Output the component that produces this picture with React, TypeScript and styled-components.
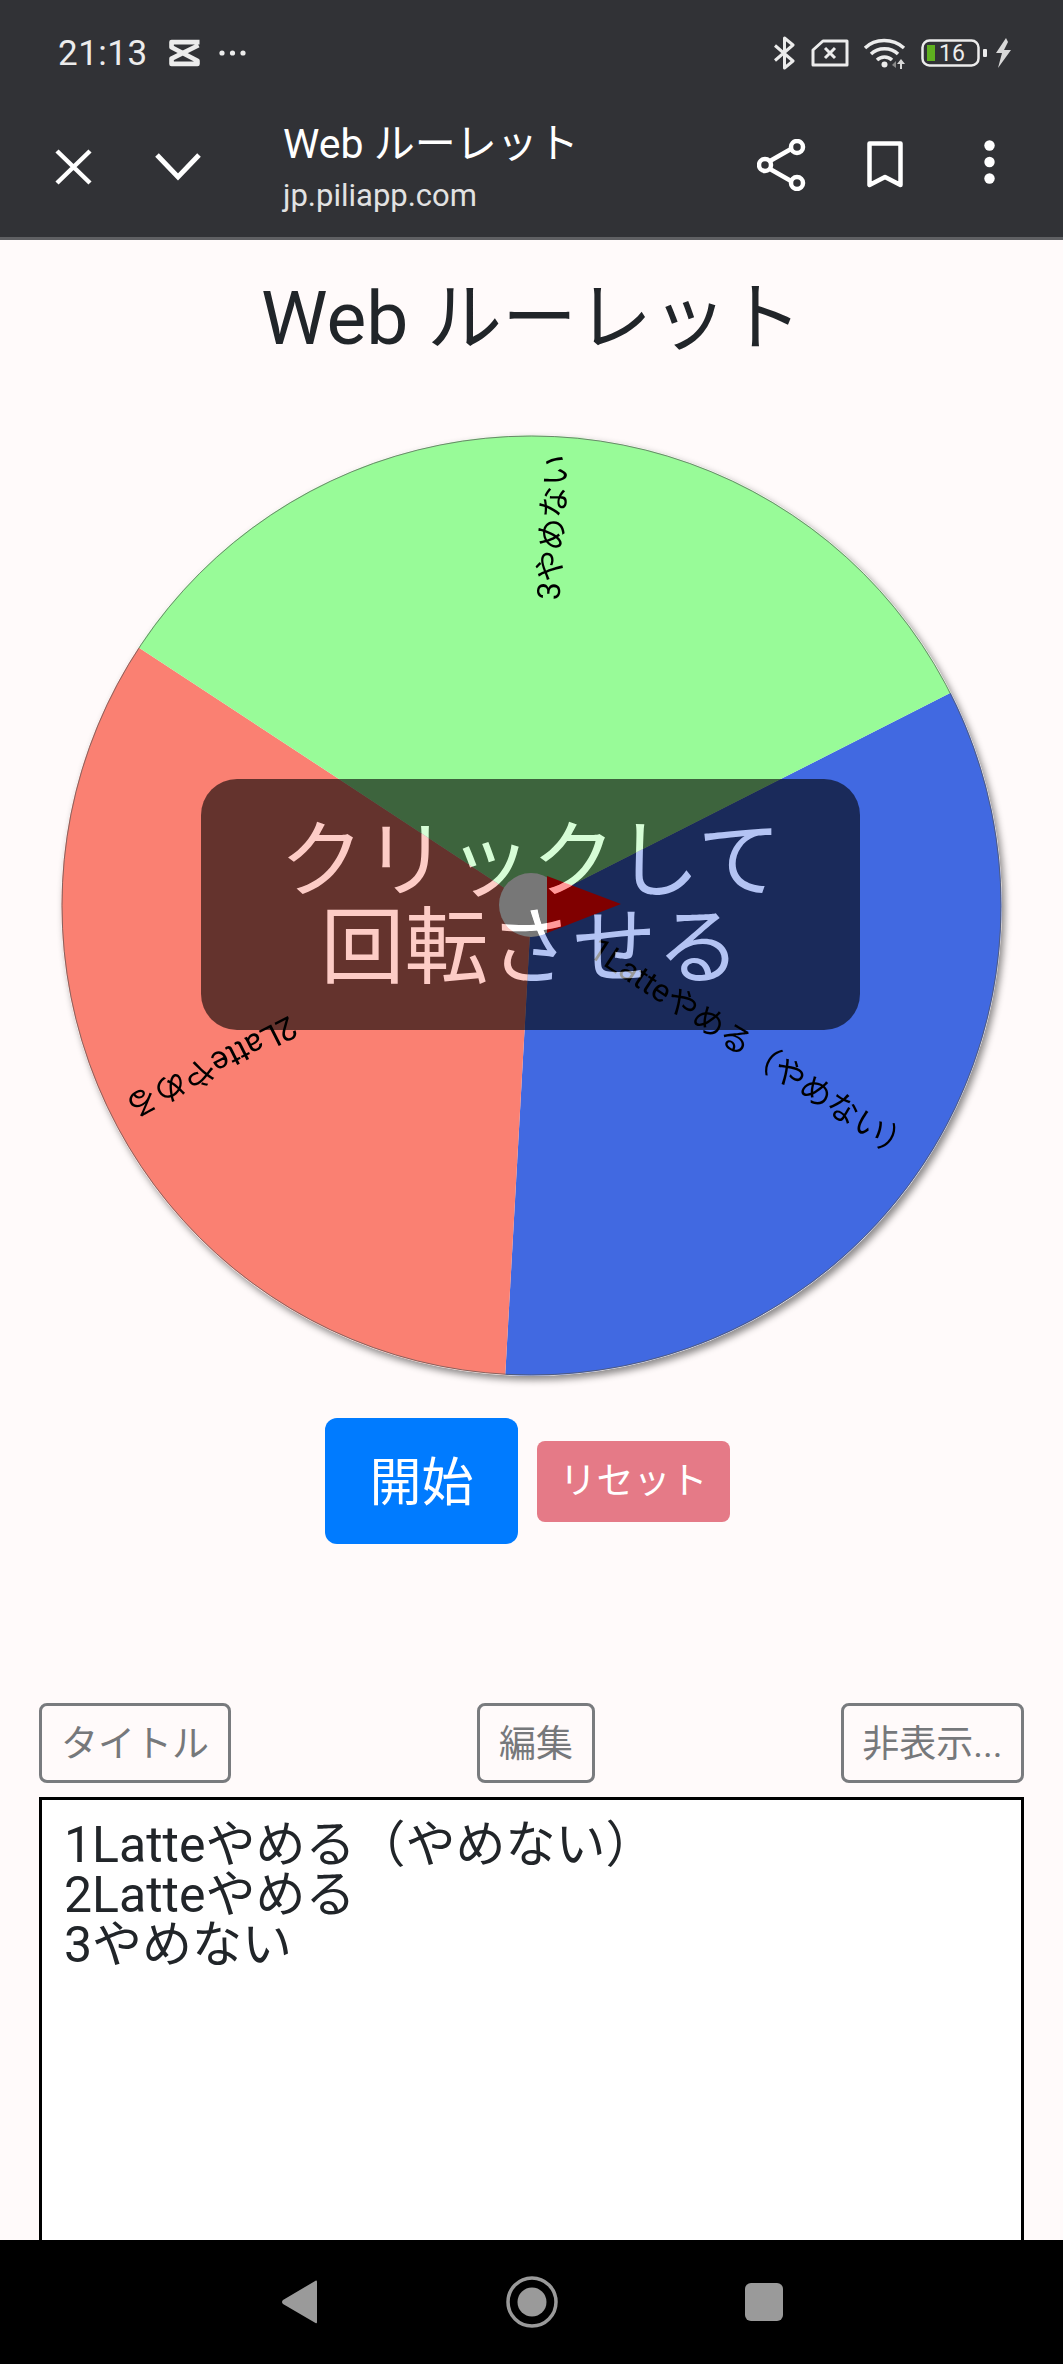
import React from 'react';
import styled, {createGlobalStyle} from 'styled-components';

const FONT = `Roboto, "Noto Sans CJK JP", sans-serif`;

const GlobalStyle = createGlobalStyle`
  html, body {
    margin: 0;
    padding: 0;
    background: #fffafa;
  }
  * {
    box-sizing: border-box;
  }
`;

const Screen = styled.div`
  display: flex;
  flex-direction: column;
  width: 1063px;
  height: 2364px;
  overflow: hidden;
  font-family: ${FONT};
  background: #fffafa;
`;

/* browser chrome */

const Header = styled.header`
  flex: none;
  height: 240px;
  background: #313236;
  border-bottom: 3px solid #5f6063;
`;

const StatusBar = styled.div`
  display: flex;
  align-items: center;
  justify-content: space-between;
  height: 106px;
  padding: 0 51px 0 58px;
  color: #ececec;
`;

const StatusGroup = styled.div`
  display: flex;
  align-items: center;
`;

const Clock = styled.span`
  font-size: 35px;
  letter-spacing: 0.5px;
  margin-right: 20px;
`;

const AppBar = styled.div`
  display: flex;
  align-items: center;
  height: 131px;
  padding: 0 68px 10px 55px;
`;

const CloseSlot = styled.div`
  display: flex;
  width: 100px;
`;

const ChevronSlot = styled.div`
  display: flex;
  width: 128px;
`;

const PageInfo = styled.div`
  flex: 1;
  display: flex;
  flex-direction: column;
  color: #fff;
`;

const PageTitle = styled.span`
  font-size: 41px;
  line-height: 50px;
`;

const PageUrl = styled.span`
  font-size: 31px;
  line-height: 38px;
  color: #e2e2e2;
  margin-top: 8px;
`;

const AppActions = styled.div`
  display: flex;
  align-items: center;
  gap: 61px;
  margin-top: -4px;
`;

/* page */

const Main = styled.main`
  flex: 1;
  min-height: 0;
  overflow: hidden;
  display: flex;
  flex-direction: column;
  padding: 0 39px;
`;

const Title = styled.h1`
  margin: 38px 0 0;
  font-size: 75px;
  line-height: 80px;
  font-weight: 400;
  text-align: center;
  color: #212529;
`;

const WheelWrap = styled.div`
  position: relative;
  isolation: isolate;
  flex: none;
  align-self: center;
  width: 941px;
  height: 941px;
  margin-top: 77px;
  border-radius: 50%;
  box-shadow: 3px 4px 7px rgba(0, 0, 0, 0.45);
`;

const WheelSvg = styled.svg`
  display: block;
  width: 941px;
  height: 941px;
`;

const WheelLabel = styled.text`
  font-family: ${FONT};
  font-size: 32px;
  fill: #000;
  dominant-baseline: central;
  text-anchor: end;
`;

const Overlay = styled.div`
  position: absolute;
  z-index: 1;
  left: 140px;
  top: 344px;
  width: 659px;
  height: 251px;
  border-radius: 36px;
  background: rgba(0, 0, 0, 0.6);
`;

const HubLayer = styled.svg`
  position: absolute;
  z-index: 2;
  left: 0;
  top: 0;
  width: 941px;
  height: 941px;
`;

const OverlayText = styled.div`
  position: absolute;
  z-index: 3;
  left: 140px;
  top: 344px;
  width: 659px;
  height: 251px;
  display: flex;
  align-items: center;
  justify-content: center;
  text-align: center;
  font-size: 84px;
  line-height: 87px;
  color: #999;
  mix-blend-mode: plus-lighter;
`;

const StartRow = styled.div`
  display: flex;
  align-items: center;
  justify-content: center;
  gap: 19px;
  margin-top: 42px;
  padding-right: 8px;
`;

const StartButton = styled.button`
  width: 193px;
  height: 126px;
  padding: 0 0 6px;
  border: 0;
  border-radius: 12px;
  background: #007bff;
  color: #fff;
  font-family: ${FONT};
  font-size: 52px;
`;

const ResetButton = styled.button`
  width: 193px;
  height: 81px;
  padding: 0 0 6px;
  border: 0;
  border-radius: 8px;
  background: #e57a87;
  color: #fff;
  font-family: ${FONT};
  font-size: 37px;
`;

const ToolRow = styled.div`
  display: flex;
  justify-content: space-between;
  margin-top: 159px;
`;

const OutlineButton = styled.button<{$width: number}>`
  width: ${p => p.$width}px;
  height: 80px;
  padding: 0 0 4px;
  border: 3px solid #797b7e;
  border-radius: 8px;
  background: transparent;
  color: #76787b;
  font-family: ${FONT};
  font-size: 37px;
`;

const Items = styled.textarea`
  flex: none;
  display: block;
  width: 100%;
  height: 600px;
  margin-top: 14px;
  padding: 20px 22px;
  border: 3px solid #000;
  border-radius: 0;
  background: #fff;
  color: #212529;
  font-family: ${FONT};
  font-size: 50px;
  line-height: 50px;
  resize: none;
  outline: none;
`;

/* android navigation */

const NavBar = styled.nav`
  flex: none;
  display: grid;
  grid-template-columns: repeat(3, 232px);
  justify-content: center;
  align-items: center;
  justify-items: center;
  height: 124px;
  background: #000;
`;

const slices = [
  {from: -26.9, to: 93.2, color: '#4169e1', label: '1Latteやめる（やめない）'},
  {from: 93.2, to: 213.3, color: '#fa8072', label: '2Latteやめる'},
  {from: 213.3, to: 333.1, color: '#98fb98', label: '3やめない'},
];

const C = 470.5;
const R = 470;

const polar = (deg: number, r: number) => {
  const a = (deg * Math.PI) / 180;
  return `${C + r * Math.cos(a)} ${C + r * Math.sin(a)}`;
};

const Wheel = () => (
  <WheelSvg viewBox="0 0 941 941">
    {slices.map(s => (
      <path
        key={s.label}
        d={`M${C} ${C} L${polar(s.from, R)} A${R} ${R} 0 0 1 ${polar(s.to, R)} Z`}
        fill={s.color}
      />
    ))}
    <circle cx={C} cy={C} r={R - 0.5} fill="none" stroke="#555" strokeOpacity="0.7" strokeWidth="1"/>
    {slices.map(s => (
      <WheelLabel
        key={s.label}
        x={C + 452}
        y={C}
        transform={`rotate(${(s.from + s.to) / 2} ${C} ${C})`}
      >
        {s.label}
      </WheelLabel>
    ))}
  </WheelSvg>
);

const Hub = () => (
  <HubLayer viewBox="0 0 941 941">
    <circle cx="470" cy="470" r="32" fill="#777"/>
    <polygon points="486,441 560,469 486,498" fill="#800000"/>
  </HubLayer>
);

const CapIcon = () => (
  <svg width="33" height="28" viewBox="0 0 31 27" fill="none" stroke="#ececec" strokeWidth="4.5">
    <path d="M30 3 H3 V8 L28 21 V24 H3 V19 L29 6" strokeLinejoin="round"/>
  </svg>
);

const MoreDots = () => (
  <svg width="27" height="6" viewBox="0 0 27 6" fill="#ececec" style={{marginLeft: 18}}>
    <circle cx="3" cy="3" r="2.6"/>
    <circle cx="13.5" cy="3" r="2.6"/>
    <circle cx="24" cy="3" r="2.6"/>
  </svg>
);

const BluetoothIcon = () => (
  <svg width="23" height="34" viewBox="0 0 23 34" fill="none" stroke="#ececec" strokeWidth="3" strokeLinejoin="round">
    <path d="M2 9.5 L20 25 L11.5 32 V2 L20 9 L2 24.5"/>
  </svg>
);

const SimIcon = () => (
  <svg width="38" height="28" viewBox="0 0 38 28" fill="none" stroke="#ececec" strokeLinejoin="round" style={{marginLeft: 15}}>
    <path d="M12 2 H36 V26 H2 V11 Z" strokeWidth="3"/>
    <path d="M14 9 L24 19 M24 9 L14 19" strokeWidth="3"/>
  </svg>
);

const WifiIcon = () => (
  <svg width="44" height="32" viewBox="0 0 44 32" fill="none" stroke="#ececec" strokeWidth="3.4" style={{marginLeft: 14}}>
    <path d="M2 11 C12 1 30 1 41 11"/>
    <path d="M8 17 C15 10 28 10 35 17"/>
    <path d="M14 23 C18 19 25 19 29 23"/>
    <circle cx="21.5" cy="27.5" r="3" fill="#ececec" stroke="none"/>
    <path d="M33 24 L29 28 L33 31 Z" fill="#8a8a8a" stroke="none"/>
    <path d="M38 22 L34 27 H42 Z M37 27 H39 V32 H37 Z" fill="#d8d8d8" stroke="none"/>
  </svg>
);

const BatteryIcon = () => (
  <svg width="66" height="28" viewBox="0 0 66 28" fill="none" style={{marginLeft: 14}}>
    <rect x="1.5" y="1.5" width="56" height="25" rx="7" stroke="#ececec" strokeWidth="2.5"/>
    <rect x="6" y="6" width="8" height="16" fill="#5fb01f"/>
    <rect x="62" y="10" width="4" height="8" rx="1" fill="#ececec"/>
    <text x="18" y="22" fontFamily="Roboto, sans-serif" fontSize="23" fill="#ececec">16</text>
  </svg>
);

const BoltIcon = () => (
  <svg width="17" height="30" viewBox="0 0 17 30" fill="#d8d8d8" style={{marginLeft: 8}}>
    <path d="M11 0 L1 15 H7 L3 30 L16 12 H9 L13 4 Z"/>
  </svg>
);

const CloseIcon = () => (
  <svg width="37" height="36" viewBox="0 0 37 36" stroke="#fff" strokeWidth="4.5">
    <path d="M2 2 L35 34 M35 2 L2 34"/>
  </svg>
);

const ChevronIcon = () => (
  <svg width="46" height="28" viewBox="0 0 46 28" fill="none" stroke="#fff" strokeWidth="5">
    <path d="M2 2 L23 24 L44 2"/>
  </svg>
);

const ShareIcon = () => (
  <svg width="49" height="52" viewBox="0 0 49 52" fill="none" stroke="#fff" strokeWidth="4.5">
    <path d="M13 22 L34 10 M13 30 L34 42"/>
    <circle cx="8" cy="26" r="6"/>
    <circle cx="40" cy="8" r="6"/>
    <circle cx="40" cy="44" r="6"/>
  </svg>
);

const BookmarkIcon = () => (
  <svg width="36" height="48" viewBox="0 0 36 48" fill="none" stroke="#fff" strokeWidth="4.5" strokeLinejoin="round">
    <path d="M2.5 2.5 H33.5 V44 L18 36 L2.5 44 Z"/>
  </svg>
);

const KebabIcon = () => (
  <svg width="11" height="50" viewBox="0 0 11 50" fill="#fff" style={{marginLeft: 20}}>
    <circle cx="5.5" cy="5.5" r="5.2"/>
    <circle cx="5.5" cy="22" r="5.2"/>
    <circle cx="5.5" cy="38.5" r="5.2"/>
  </svg>
);

const BackIcon = () => (
  <svg width="35" height="44" viewBox="0 0 35 44" fill="#9a9a9a">
    <path d="M34 0.5 Q35 0 35 2 V42 Q35 44 33.5 43 L1 24 Q-1 22 1 20 Z"/>
  </svg>
);

const HomeIcon = () => (
  <svg width="52" height="52" viewBox="0 0 52 52" fill="none">
    <circle cx="26" cy="26" r="24" stroke="#9a9a9a" strokeWidth="3.5"/>
    <circle cx="26" cy="26" r="14.5" fill="#9a9a9a"/>
  </svg>
);

const SquareIcon = () => (
  <svg width="38" height="38" viewBox="0 0 38 38" fill="#9a9a9a">
    <rect width="38" height="38" rx="6"/>
  </svg>
);

const App = () => {
  return (
    <Screen>
      <GlobalStyle/>
      <Header>
        <StatusBar>
          <StatusGroup>
            <Clock>21:13</Clock>
            <CapIcon/>
            <MoreDots/>
          </StatusGroup>
          <StatusGroup>
            <BluetoothIcon/>
            <SimIcon/>
            <WifiIcon/>
            <BatteryIcon/>
            <BoltIcon/>
          </StatusGroup>
        </StatusBar>
        <AppBar>
          <CloseSlot><CloseIcon/></CloseSlot>
          <ChevronSlot><ChevronIcon/></ChevronSlot>
          <PageInfo>
            <PageTitle>Web ルーレット</PageTitle>
            <PageUrl>jp.piliapp.com</PageUrl>
          </PageInfo>
          <AppActions>
            <ShareIcon/>
            <BookmarkIcon/>
            <KebabIcon/>
          </AppActions>
        </AppBar>
      </Header>
      <Main>
        <Title>Web ルーレット</Title>
        <WheelWrap>
          <Wheel/>
          <Overlay/>
          <Hub/>
          <OverlayText>クリックして<br/>回転させる</OverlayText>
        </WheelWrap>
        <StartRow>
          <StartButton>開始</StartButton>
          <ResetButton>リセット</ResetButton>
        </StartRow>
        <ToolRow>
          <OutlineButton $width={192}>タイトル</OutlineButton>
          <OutlineButton $width={118}>編集</OutlineButton>
          <OutlineButton $width={183}>非表示...</OutlineButton>
        </ToolRow>
        <Items readOnly defaultValue={'1Latteやめる（やめない）\n2Latteやめる\n3やめない'}/>
      </Main>
      <NavBar>
        <BackIcon/>
        <HomeIcon/>
        <SquareIcon/>
      </NavBar>
    </Screen>
  );
};

export default App;
